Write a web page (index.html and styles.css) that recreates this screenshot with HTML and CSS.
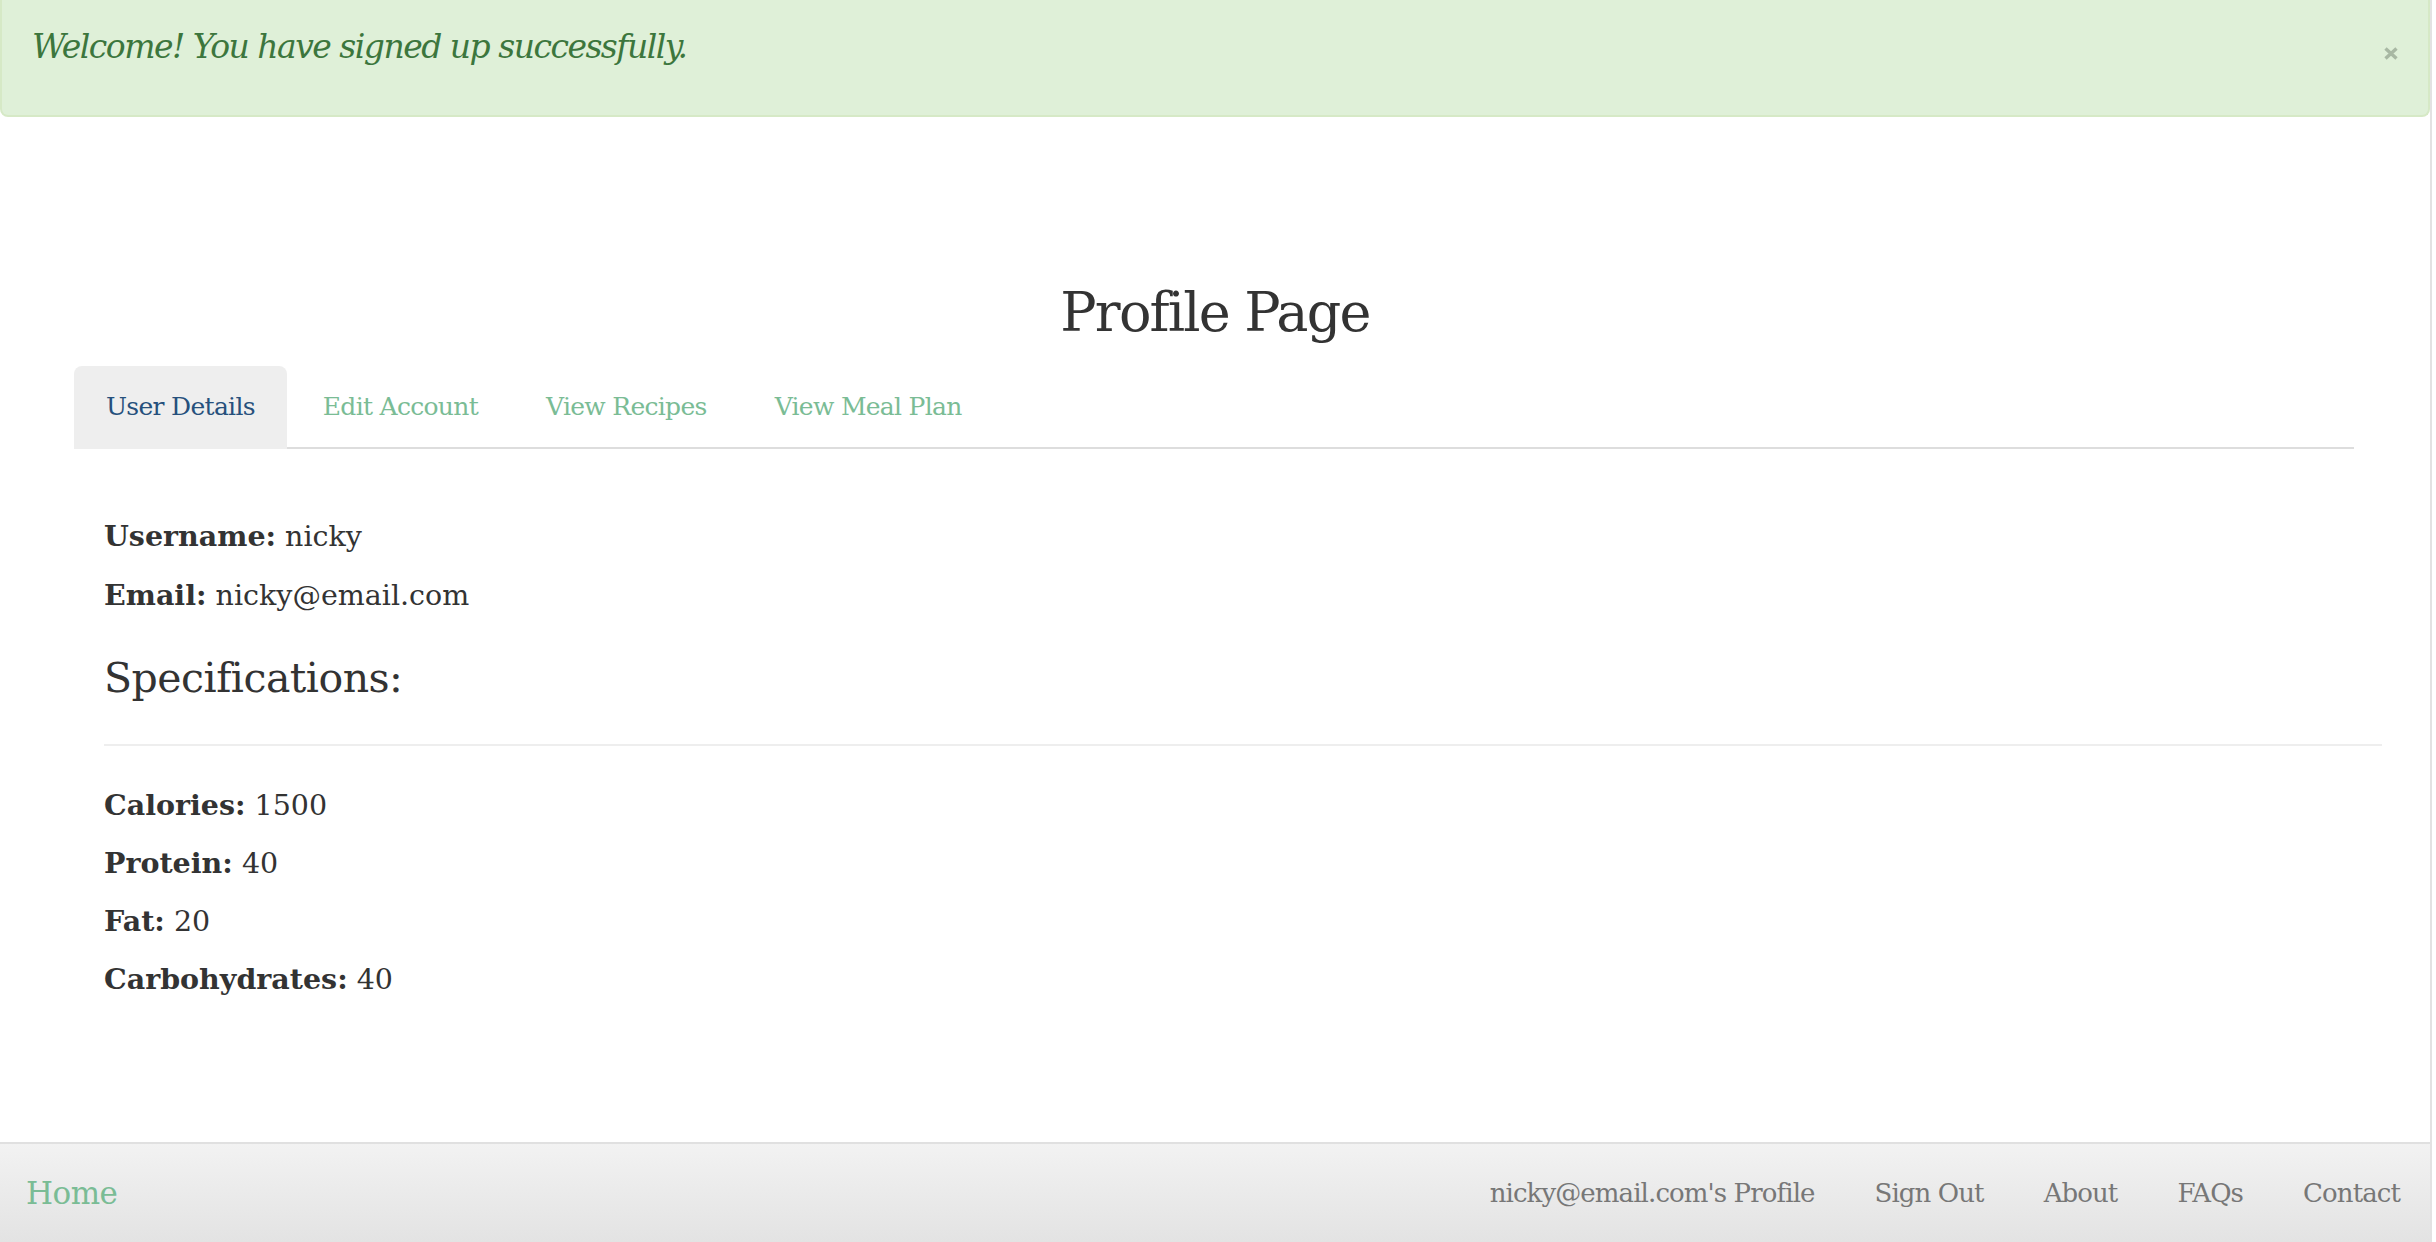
FILE: index.html
```html
<!DOCTYPE html>
<html lang="en">
<head>
<meta charset="utf-8">
<title>Profile Page</title>
<link rel="stylesheet" href="styles.css">
</head>
<body>
<div class="page">
  <div class="alert">
    <p class="alert-text">Welcome! You have signed up successfully.</p>
    <button class="alert-close" type="button" aria-label="Close">
      <svg width="14" height="13" viewBox="0 0 14 13"><path d="M1.5 1.5 L12.5 11.5 M12.5 1.5 L1.5 11.5" stroke="#a8b8a3" stroke-width="3.4" stroke-linecap="butt" fill="none"/></svg>
    </button>
  </div>

  <main class="main">
    <h1 class="title">Profile Page</h1>
    <ul class="tabs">
      <li class="tab active"><a href="#">User Details</a></li>
      <li class="tab"><a href="#">Edit Account</a></li>
      <li class="tab"><a href="#">View Recipes</a></li>
      <li class="tab"><a href="#">View Meal Plan</a></li>
    </ul>
    <section class="tab-content">
      <div class="fields">
        <p class="field"><b>Username:</b> nicky</p>
        <p class="field"><b>Email:</b> nicky@email.com</p>
      </div>
      <h3 class="spec-title">Specifications:</h3>
      <hr class="rule">
      <div class="fields specs">
        <p class="field"><b>Calories:</b> 1500</p>
        <p class="field"><b>Protein:</b> 40</p>
        <p class="field"><b>Fat:</b> 20</p>
        <p class="field"><b>Carbohydrates:</b> 40</p>
      </div>
    </section>
  </main>

  <footer class="footer">
    <a class="brand" href="#">Home</a>
    <nav class="footer-nav">
      <a href="#">nicky@email.com's Profile</a>
      <a href="#">Sign Out</a>
      <a href="#">About</a>
      <a href="#">FAQs</a>
      <a href="#">Contact</a>
    </nav>
  </footer>
</div>
</body>
</html>
```

FILE: styles.css
```css
html, body {
  margin: 0;
  padding: 0;
  background: #ffffff;
}

body {
  font-family: "DejaVu Serif", "Liberation Serif", serif;
  color: #333333;
}

.page {
  width: 2432px;
  min-height: 1242px;
  box-sizing: border-box;
  border-right: 2px solid #e2e2e2;
  display: flex;
  flex-direction: column;
}

/* Alert */
.alert {
  height: 117px;
  box-sizing: border-box;
  background: #dff0d8;
  border: 2px solid #d6e9c6;
  border-top: 0;
  border-radius: 0 0 8px 8px;
  padding: 30px 30px 0 30px;
  display: flex;
  align-items: flex-start;
}

.alert-text {
  margin: 0;
  font-size: 33px;
  line-height: 33px;
  font-style: italic;
  color: #3c763d;
  letter-spacing: -1.5px;
}

.alert-close {
  margin-left: auto;
  margin-top: 17px;
  padding: 0;
  border: 0;
  background: transparent;
  line-height: 0;
}

/* Main */
.main {
  display: flex;
  flex-direction: column;
}

.title {
  margin: 169px 0 0;
  font-size: 54px;
  line-height: 54px;
  font-weight: 400;
  text-align: center;
  color: #333333;
  letter-spacing: -1.8px;
}

.tabs {
  list-style: none;
  margin: 26px 0 0 74px;
  padding: 0;
  width: 2280px;
  display: flex;
  border-bottom: 2px solid #dddddd;
}

.tab {
  margin: 0 4px -2px 0;
}

.tab a {
  display: block;
  padding: 28px 32px 29px;
  font-size: 25px;
  line-height: 26px;
  color: #7abc95;
  text-decoration: none;
  border-radius: 8px 8px 0 0;
  letter-spacing: -0.7px;
}

.tab.active a {
  background: #eeeeee;
  color: #26507c;
}

.tab-content {
  margin-left: 104px;
  width: 2278px;
  padding-top: 73px;
}

.fields {
  display: flex;
  flex-direction: column;
  gap: 30px;
}

.field {
  margin: 0;
  font-size: 28.5px;
  line-height: 29px;
  color: #333333;
}

.field b {
  font-weight: 700;
}

.specs {
  margin-top: 45px;
  gap: 29px;
}

.spec-title {
  margin: 48px 0 0;
  font-size: 41px;
  line-height: 41px;
  font-weight: 400;
  color: #333333;
  letter-spacing: -0.5px;
}

.rule {
  margin: 45px 0 0;
  border: 0;
  height: 2px;
  background: #eeeeee;
}

/* Footer */
.footer {
  margin-top: auto;
  height: 100px;
  box-sizing: border-box;
  border-top: 2px solid #e0e0e0;
  background: linear-gradient(#f2f2f2, #e3e3e3);
  display: flex;
  align-items: center;
  padding: 0 0 0 26px;
}

.brand {
  font-size: 31px;
  line-height: 31px;
  color: #7abc95;
  text-decoration: none;
  letter-spacing: -0.5px;
}

.footer-nav {
  margin-left: auto;
  display: flex;
}

.footer-nav a {
  padding: 0 30px;
  font-size: 26px;
  line-height: 26px;
  color: #777777;
  text-decoration: none;
  letter-spacing: -0.9px;
}
```
